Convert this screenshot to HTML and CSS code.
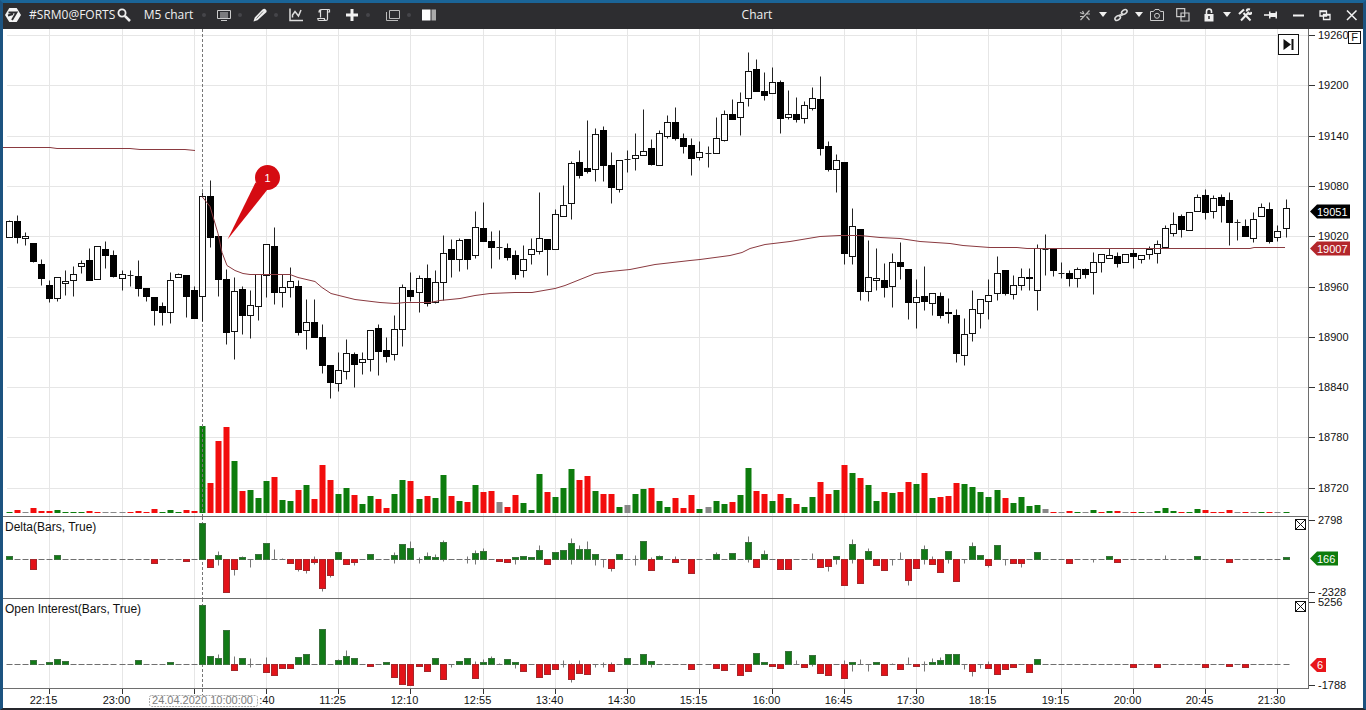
FILE: index.html
```html
<!DOCTYPE html>
<html lang="en">
<head>
<meta charset="utf-8">
<title>Chart</title>
<link rel="stylesheet" href="styles.css">
</head>
<body>
<div class="app">
  <header class="toolbar">
    <div class="group">
      <svg class="logo" viewBox="0 0 16 16"><path d="M4.300 1h7.400L16 8l-4.300 7H4.300L0 8z" fill="#f4f4f4"/><path d="M3.500 5.500h8L7 13M3 8.500l5-1.500" fill="none" stroke="#2d2d30" stroke-width="1.900"/></svg>
      <button class="txt symbol">#SRM0@FORTS</button>
      <button class="ico" aria-label="Search"><svg viewBox="0 0 14 14"><circle cx="5" cy="5" r="3.600" fill="none" stroke="#eee" stroke-width="1.800"/><path d="M7.800 7.800L13 13" stroke="#eee" stroke-width="2.600"/></svg></button>
      <button class="txt period">M5 chart</button>
      <i class="dot"></i>
      <button class="ico" aria-label="Template"><svg viewBox="0 0 14 14"><path d="M.5 2.500h13v8H.5zM3 5h8M3 7h8M3 9h8M4 12.500h6" fill="none" stroke="#ccc"/></svg></button>
      <i class="dot"></i>
      <button class="ico" aria-label="Draw"><svg viewBox="0 0 14 14"><path d="M.5 13.500l1.200-4L9.500 1.500Q11.500 0 13 1.800T12.500 5l-8 7.300z" fill="#eee"/><path d="M3.500 10.500l6.500-7" stroke="#666" stroke-width=".9"/></svg></button>
      <i class="dot"></i>
      <button class="ico" aria-label="Indicators"><svg viewBox="0 0 14 14"><path d="M1 .5v12h13M3.500 9.500V7l2.500-3.500 3.500 4.500 2.500-6" fill="none" stroke="#ddd" stroke-width="1.500"/></svg></button>
      <button class="ico wide" aria-label="Strategies"><svg viewBox="0 0 14 14"><path d="M3.500 9.500V3q0-1.500 1.500-1.500h7.500M4.500 1.500Q2 1.500 2 4h1.500M10.500 1.500V11q0 1.500-1.500 1.500H2Q.8 12.500.8 10.500h6.500q0 2 1.700 2M12.500 1.500V4h-2" fill="none" stroke="#ddd" stroke-width="1.200"/></svg></button>
      <button class="ico wide" aria-label="Add"><svg viewBox="0 0 14 14"><path d="M7 1v12M1 7h12" stroke="#f2f2f2" stroke-width="3"/></svg></button>
      <i class="dot"></i>
      <button class="ico wide" aria-label="Windows"><svg viewBox="0 0 14 14"><path d="M3.500 2.500h10v8h-10zM.5 4v8.500H12" fill="none" stroke="#bbb"/></svg></button>
      <i class="dot"></i>
      <button class="ico" aria-label="Panel"><svg viewBox="0 0 14 14"><path d="M0 1.500h8.500v11H0z" fill="#fff"/><path d="M9.500 1.500h4.500v11H9.500z" fill="#aaa"/></svg></button>
    </div>
    <h1 class="title">Chart</h1>
    <div class="group right">
      <button class="ico" aria-label="Snap"><svg viewBox="0 0 14 14"><path d="M2.500 12l9-9.500M2 4.500l3.500 1.500M8.500 8.500l3 3.500M2 8.500h3.500M8 6h4M4.500 3l1.500 3" fill="none" stroke="#bbb" stroke-width="1.200"/></svg></button>
      <i class="caret"></i>
      <button class="ico" aria-label="Link"><svg viewBox="0 0 14 14"><g fill="none" stroke="#ddd" stroke-width="1.600"><ellipse cx="3.700" cy="10" rx="3" ry="2" transform="rotate(-35 3.700 10)"/><ellipse cx="10.300" cy="4" rx="3" ry="2" transform="rotate(-35 10.300 4)"/><path d="M5 8.500q.5-2 2-1.500t2-1.500"/></g></svg></button>
      <i class="caret"></i>
      <button class="ico" aria-label="Screenshot"><svg viewBox="0 0 14 14"><path d="M.5 3.500h3l1.500-2h4l1.500 2h3v9H.5z" fill="none" stroke="#ccc"/><circle cx="7" cy="7.800" r="2.500" fill="none" stroke="#ccc"/></svg></button>
      <button class="ico spaced" aria-label="Duplicate"><svg viewBox="0 0 14 14"><path d="M.7.700h8v8h-8zM5 5h8v8H5z" fill="none" stroke="#ccc" stroke-width="1.200"/></svg></button>
      <button class="ico spaced" aria-label="Lock"><svg viewBox="0 0 14 14"><path d="M2.500 6h9v7.500h-9z" fill="#eee"/><path d="M4.500 6V3.500q0-2.500 2.500-2.500t2.500 2.500V5" fill="none" stroke="#eee" stroke-width="1.600"/><path d="M7 8v3" stroke="#2d2d30" stroke-width="1.500"/></svg></button>
      <i class="caret"></i>
      <button class="ico" aria-label="Settings"><svg viewBox="0 0 14 14"><path d="M3 12.500L11 4M5.500 5l7 7.500" stroke="#eee" stroke-width="2"/><path d="M1 6l5-4.500M9 3.500q-.5-3 3-2M10.500 5.500q2.500 1.500 3-1.500" fill="none" stroke="#eee" stroke-width="2.200"/></svg></button>
      <button class="ico spaced" aria-label="Pin"><svg viewBox="0 0 14 14"><path d="M0 7h6" stroke="#eee" stroke-width="1.600"/><path d="M5 3.500h1.500V5h5V3.500H13v7h-1.500V9h-5v1.500H5z" fill="#eee"/></svg></button>
      <button class="ico win" aria-label="Minimize"><svg viewBox="0 0 14 14"><path d="M2 7.500h11" stroke="#f2f2f2" stroke-width="2"/></svg></button>
      <button class="ico win" aria-label="Restore"><svg viewBox="0 0 14 14"><path d="M2 3h6.500v5H2zM2 3.500h6.500M5.500 6.500H12v5H5.500zM5.500 7H12" fill="#2d2d30" stroke="#f2f2f2" stroke-width="1.300"/></svg></button>
      <button class="ico win" aria-label="Close"><svg viewBox="0 0 14 14"><path d="M2 2.500l9.500 9.500M11.500 2.500L2 12" stroke="#f2f2f2" stroke-width="1.500"/></svg></button>
    </div>
  </header>
  <main class="chart">
    <section class="pane price">
      <svg class="plot" id="price"></svg>
      <button class="jump" aria-label="Go to last bar"><svg viewBox="0 0 19 19"><path d="M4.500 4v11l7.500-5.500z" fill="#111"/><path d="M13.500 4v11" stroke="#111" stroke-width="2"/></svg></button>
    </section>
    <aside class="scale">
      <svg class="plot" id="priceScale"></svg>
      <button class="fix">F</button>
    </aside>
    <section class="pane">
      <svg class="plot" id="delta"></svg>
      <h2 class="name">Delta(Bars, True)</h2>
      <button class="close" aria-label="Close Delta"><svg viewBox="0 0 9 9"><path d="M0 0l9 9M9 0L0 9" stroke="#111"/></svg></button>
    </section>
    <aside class="scale"><svg class="plot" id="deltaScale"></svg></aside>
    <section class="pane">
      <svg class="plot" id="oi"></svg>
      <h2 class="name">Open Interest(Bars, True)</h2>
      <button class="close" aria-label="Close Open Interest"><svg viewBox="0 0 9 9"><path d="M0 0l9 9M9 0L0 9" stroke="#111"/></svg></button>
    </section>
    <aside class="scale"><svg class="plot" id="oiScale"></svg></aside>
    <footer class="time"><svg class="plot" id="time"></svg></footer>
  </main>
</div>
<script src="chart.js"></script>
</body>
</html>
```
FILE: styles.css
```css
* { box-sizing: border-box; }
body {
  margin: 0;
  font-family: "Liberation Sans", Arial, sans-serif;
  font-size: 11px;
  color: #111;
  background: #fff;
}
button { border: 0; padding: 0; background: none; color: inherit; font: inherit; }
svg { display: block; }
.app {
  display: flex;
  flex-direction: column;
  height: 100vh;
  border: 3px solid #1c5380;
  border-top-color: #1a6497;
  border-bottom: 2px solid #25262c;
}
.toolbar {
  display: flex;
  align-items: center;
  justify-content: space-between;
  height: 26px;
  padding: 0 4px 3px 2px;
  background: #2d2d30;
  color: #f0f0f0;
  font-family: "Open Sans", "Noto Sans", sans-serif;
  font-size: 12px;
}
.group { display: flex; align-items: center; }
.logo { width: 16px; height: 16px; }
.txt { white-space: nowrap; line-height: 20px; }
.symbol { width: 88px; margin-left: 8px; text-align: left; }
.period { width: 53px; margin-left: 11px; }
.title { margin: 0; font-size: 12px; font-weight: 400; }
.ico { flex: none; width: 14px; height: 14px; }
.ico svg { width: 14px; height: 14px; }
.wide { margin-left: 14px; }
.dot + .wide { margin-left: 5px; }
.dot { width: 4px; height: 4px; margin: 0 11px 0 7px; border-radius: 2px; background: #45454a; }
.caret {
  margin: 0 7px;
  border: 4px solid transparent;
  border-top: 5px solid #f0f0f0;
  border-bottom: 0;
}
.spaced { margin-left: 12px; }
.win { margin-left: 13px; }
.chart {
  flex: 1;
  min-height: 0;
  display: grid;
  grid-template-columns: minmax(0, 1fr) 55px;
  grid-template-rows: minmax(0, 1fr) 82px 90px 19px;
}
.pane { position: relative; border-bottom: 1px solid #6e6e6e; }
.scale { position: relative; border-left: 1px solid #6e6e6e; }
.plot { width: 100%; height: 100%; overflow: visible; position: absolute; inset: 0; }
.time { grid-column: 1 / -1; position: relative; }
.name {
  position: absolute;
  top: 2px;
  left: 2px;
  margin: 0;
  font-size: 12px;
  font-weight: 400;
  line-height: 16px;
}
.jump {
  position: absolute;
  top: 5px;
  right: 9px;
  width: 21px;
  height: 21px;
  border: 1px solid #111;
  background: #fff;
}
.fix {
  position: absolute;
  top: 2px;
  right: 2px;
  width: 13px;
  height: 13px;
  border: 1px solid #111;
  background: #fff;
  line-height: 11px;
}
.close {
  position: absolute;
  top: 2px;
  right: 2px;
  width: 11px;
  height: 11px;
  border: 1px solid #111;
  background: #fff;
}
.grid { stroke: #e6e6e6; }
.tick { stroke: #333; }
.cross { stroke: #777; stroke-dasharray: 3 2; }
.wick { stroke: #222; }
.bull { fill: #fff; stroke: #111; }
.bear { fill: #000; }
.vwap { fill: none; stroke: #8a3a40; stroke-width: 1; }
.g { fill: #0d7c0d; }
.r { fill: #f20d0d; }
.n { fill: #888; }
.up { fill: #127a17; stroke: #3b703e; }
.down { fill: #e31219; stroke: #a3272b; }
.flat { stroke: #6f6f6f; }
.stem { stroke: #777; }
.callout { fill: #d50b12; }
.light { fill: #fff; }
.stamp { fill: #fff; stroke: #aaa; stroke-dasharray: 2 1; }
.muted { fill: #7d7d7d; }
```
FILE: chart.js
```js
// Candles: high, body top, body bottom, low, kind (o = rising, f = falling, d = doji)
const candles = `220 221 237 237 o|215 221 237 243 f|232 236 238 245 o|243 243 261 262 f|259 264 278 285 f|280 285 298 302 f|277 277 298 301 o|270 281 282 295 o|266 274 280 296 o|260 263 266 273 o
248 260 280 280 f|246 246 279 279 o|241 249 255 268 f|250 255 276 277 f|270 274 278 290 o|270 275 275 286 d|260 276 288 296 f|288 288 296 301 f|297 297 310 325 f|302 306 312 325 f
272 280 312 323 o|273 274 277 277 o|275 275 296 317 f|286 290 318 318 f|192 196 296 321 o|180 196 237 247 f|236 236 279 296 f|269 279 332 344 f|277 291 331 359 o|286 289 315 334 f
290 305 315 338 o|274 274 306 320 o|244 244 275 297 o|227 246 292 304 f|274 287 292 307 o|267 281 287 297 o|280 286 332 335 f|299 322 330 349 o|299 322 337 337 f|324 337 365 373 f
365 365 382 398 f|352 370 383 391 o|339 353 371 379 o|352 354 364 387 f|352 359 362 374 o|330 330 359 371 o|324 328 351 375 f|337 350 356 362 f|315 329 354 360 o|284 287 329 346 o
272 290 296 301 f|275 278 292 312 o|264 278 303 306 f|270 282 302 303 o|235 253 282 300 o|239 249 259 277 f|238 240 259 271 o|239 239 259 269 f|211 227 255 258 o|202 228 241 241 f
231 241 247 268 f|230 247 247 259 d|243 248 257 260 f|250 255 274 279 f|245 259 270 277 o|238 249 254 264 o|192 238 251 254 o|239 239 249 275 f|209 214 249 249 o|185 205 216 216 o
161 163 203 219 o|150 162 175 178 f|120 168 171 173 f|128 134 169 181 o|126 130 165 181 f|152 165 187 203 f|160 160 189 192 o|150 159 159 172 d|133 155 158 170 o|109 151 155 155 o
139 148 164 165 f|130 133 165 165 o|115 122 136 138 o|107 122 138 140 f|133 138 146 153 f|138 145 158 175 f|141 152 157 160 o|146 153 153 167 d|117 138 153 153 o|110 114 140 141 o
99 114 119 119 f|92 102 117 135 o|52 71 98 106 o|59 69 91 91 f|72 91 95 100 f|67 82 93 93 o|80 82 118 133 f|90 114 117 119 o|97 114 119 122 f|101 105 118 123 o
87 98 108 110 o|76 99 148 155 f|141 146 169 171 f|154 160 169 192 o|162 162 253 264 f|208 226 256 264 o|229 229 291 300 f|240 277 291 301 o|248 278 280 290 o|263 280 287 297 f
253 262 286 307 o|242 262 266 279 f|269 269 302 319 f|279 297 302 328 o|266 296 301 310 f|293 293 303 315 o|292 296 315 318 f|298 312 313 323 f|309 315 353 362 f|318 334 355 365 o
290 309 333 341 o|299 299 313 328 o|279 295 301 319 o|256 273 293 300 o|270 270 293 295 f|275 285 294 299 o|268 277 285 290 o|268 277 278 290 f|244 248 290 310 o|234 249 249 275 d
249 249 270 276 f|262 273 273 278 d|270 273 278 286 f|267 269 278 287 o|268 269 274 278 f|252 262 272 294 o|254 254 262 272 o|248 255 258 258 o|252 256 263 267 f|254 254 262 262 o
249 253 256 268 f|255 255 259 263 o|246 249 254 259 o|240 244 253 263 o|225 228 247 247 o|212 224 233 236 o|214 216 229 237 f|212 212 230 230 o|194 197 211 211 o|189 195 212 219 f
195 198 211 218 o|194 197 205 222 f|192 200 222 245 f|219 222 222 240 d|219 226 236 236 f|212 219 238 242 o|203 207 216 216 o|202 209 241 243 f|225 231 237 241 o|199 208 228 237 o`
  .split(/[|\n]/).map(s => { const a = s.trim().split(' '); return [+a[0], +a[1], +a[2], +a[3], a[4]]; });

// Volume: height and colour (g green, r red, n neutral)
const volume = `1g 3r 0n 5r 2r 2r 3g 1g 1g 1g 2r 0r 0n 0n 0n 0r 2r 0r 4r 0g 3g 0g 3r 2r 87g 30r 72r 86r 52g 22r 23g 15g 32g 36r 13g 12g 23r 28g 14r 48r
33r 19g 25g 18r 9g 17g 14r 5r 19g 33g 32r 14g 17r 15g 38g 17r 12g 11r 28g 21r 22r 11n 6r 18r 10g 3g 39g 21r 16g 25g 44g 33r 37r 22g 19r 19r 6g 8n 19g 24g
25r 12g 6g 15r 5r 18r 4g 6n 12g 9g 11r 18g 45g 22r 19r 12g 19r 15g 9r 6g 16g 31r 19r 23g 48r 40g 35r 28g 12g 21r 20g 21r 31r 29g 40r 15g 16r 17r 30r 29g
26g 21g 16g 23g 15r 10g 16g 7g 8g 4n 1r 0n 2r 1g 0n 3g 0r 2g 2r 0n 1r 0g 0n 2g 5g 2g 0r 1g 4g 3r 0r 1r 3r 0n 1r 0n 0g 1r 0n 1g`
  .split(/\s+/).map(s => [parseInt(s), s.slice(-1)]);

// Histograms: value[,top of stem[,bottom of stem]]
const parseBars = t => t.trim().split(/\s+/).map(s => s.split(',').map(Number));
const delta = parseBars(`3 1 0 -10 -1 -1 4 1 0 -1 0 0 0 0 1 0 1 0 -4 -1 1 1 -2 -1 36 -8 4,8,-6 -33 -10,0,-16 2,3 0,0,-8 5 16 0,10 0,1 -4 -10,0,-12 -11,0,-14 -3,3,-5 -29,0,-32
-16,0,-18 7 -5 -3,0,-6 -1 5 -1 0 4,7,-4 15 11,18 0,2,-4 3,7 2,5 17,19,-2 -1 0 1,3,-4 6,9,-5 8,11 1 -2 -3 2,0,-5 3 2 9,14 -5 7 9 16,21,-5 10,14 10,18 5,0,-6 0,0,-8 -9,0,-12 5 1 1,4,-6 18
-11,2 3,4 1 -3,3 -1 -14 1 -1 5,7 0 6 0 17,23,-3 -8 5,9 0 -10 -10 -1 -1 1,6 -8 -7,0,-12 3,0,-5 -26 15,20,-4 -24 8,11 -6 -11 -1,0,-6 0,7 -21,0,-26 -9 10,14,-5 -5,3 -13 8,0,-4 -22 0,0,-4
13,17 4 -6,0,-8 14 -1,0,-6 -4 -4,0,-8 1 7 1 -1 -1 -4 0 0 0,0,-3 0 3 -3 0 -1 -1 0 1 1,4 1 0 1 3 0 0 0 -3 0 -1 0 0 -1 0 2`);
const oi = parseBars(`0 1 -1 4 0 2 5 3 0 -1 0 -1 0 0 -1 0 4 0 -1 -1 2 -1 -1 -1 59 8 6,10 34 -6,8 6 0,6,-3 1 -8,7 -11 -4 -4 7 10 -1 35
-1 4,5 8,14 6 1 -2 1 2 -13 -20 -21 -2 -7 6 -15 0,0,-3 3 6 -14,3 2,5 6,8 0,1 5 2,0,-4 -7 -1 -13 -10 -5 1,4,-3 -15,1,-18 -9,4 -10 0,0,-3 0,2,-3 -7,2 -1 6 1 10
3,0,-3 1 0 1 0 -5 0 -1 -4 -6 -1 -11 -7 11 2 -2 -4 13 0,4 -3 9,0,-2 -9 -11 0 -14,4 2,0,-7 0,5 -1,0,-7 2 -11 -1,1 -5 1,7 -2 0,3,-7 2,6 4,7 10 10 0,0,-5
-7,0,-12 -1,0,-4 -4,3 -10 -5 -3 1 -8 5 1 1 0 -1 0 0 1 1 0 0 0 -3 0 -1 -3 -1 -1 -1 1 0 -3 0 -1 -2 0 -3 -1 0 0 0 0`);

// VWAP points: bar position, level
const vwap = [
  [[3, 147], [50, 147], [57, 148], [130, 148], [140, 149], [185, 149], [195, 150]],
  [[202, 196], [210, 206], [218, 233], [222, 252], [227, 265], [235, 270], [243, 273], [250, 274], [290, 274], [298, 277], [315, 281], [322, 287], [331, 293], [355, 299], [380, 302], [395, 303], [405, 302], [430, 302], [440, 300], [460, 298], [475, 295], [490, 293], [515, 292], [532, 292], [555, 288], [565, 285], [580, 279], [595, 273], [610, 271], [630, 269], [640, 267], [655, 264], [690, 260], [700, 259], [730, 255], [742, 252], [750, 248], [765, 244], [790, 241], [820, 236], [840, 235], [860, 235], [880, 237], [900, 238], [920, 241], [950, 243], [963, 245], [990, 247], [1017, 247], [1027, 248], [1250, 248], [1254, 247], [1285, 247]]
];
const times = ['22:15', '23:00', '', '10:40', '11:25', '12:10', '12:55', '13:40', '14:30', '15:15', '16:00', '16:45', '17:30', '18:15', '19:15', '20:00', '20:45', '21:30'];

const $ = id => document.getElementById(id);
const rect = (c, x, y, w, h, extra = '') => `<rect class="${c}" x="${x}" y="${y}" width="${w}" height="${h}" ${extra}/>`;
const line = (c, x1, y1, x2, y2) => `<path class="${c}" d="M${x1} ${y1}L${x2} ${y2}"/>`;
const text = (x, y, s, c = '', a = 'start') => `<text class="${c}" x="${x}" y="${y}" text-anchor="${a}" font-size="11" fill="${c ? '' : '#111'}">${s}</text>`;
const tag = (y, s, color, w) => `<path fill="${color}" d="M1 ${y}L8 ${y - 7}H${w}V${y + 7}H8z"/>` + text(8, y + 4, s, 'light');

function draw() {
  const W = $('price').clientWidth, H = $('price').clientHeight;
  const step = (W - 28.6) / 159;
  const X = i => Math.floor(6.615 + step * i) + 0.5;
  const k = H / 487;
  const Y = y => Math.round((y - 29) * k) + 0.5;
  const columns = h => times.map((t, n) => line('grid', X(5 + n * 9), 0, X(5 + n * 9), h)).join('');
  const cross = h => line('cross', X(24), 0, X(24), h);

  let s = columns(H), scale = '';
  for (let n = 0; n < 10; n++) {
    const y = Y(35 + n * 50.3);
    s += line('grid', 4, y, W, y);
    scale += line('tick', 0, y, 6, y) + text(9, y + 3.5, 19260 - n * 60);
  }
  volume.forEach(([h, c], i) => { s += rect(c, X(i) - 3, H - 3 - Math.max(h, 1), 6, Math.max(h, 1)); });
  s += cross(H);
  candles.forEach(([h, t, b, l, kind], i) => {
    const x = X(i);
    s += line('wick', x, Y(h), x, Y(l));
    if (kind === 'o') s += rect('bull', x - 3, Y(t), 6, Math.max(Y(b) - Y(t), 2));
    else if (kind === 'f') s += rect('bear', x - 3.5, Y(t) - 0.5, 7, Math.max(Y(b) - Y(t) + 1, 2));
    else s += line('wick', x - 3, Y(t), x + 3, Y(t));
  });
  vwap.forEach(p => {
    s += `<path class="vwap" d="M${p.map(([x, y]) => [6.6 + (x - 9.6) / 8.0275 * step, Y(y)].join(' ')).join('L')}"/>`;
  });
  const cx = X(32) + 1, cy = Y(177);
  s += `<circle class="callout" cx="${cx}" cy="${cy}" r="12.5"/><path class="callout" d="M${cx - 12} ${cy + 5}L${cx - 40} ${Y(239)}L${cx} ${cy + 12}z"/>` + text(cx, cy + 4, '1', 'light', 'middle');
  $('price').innerHTML = s;
  scale += tag(Y(211), '19051', '#000', 41) + tag(Y(248), '19007', '#b3262b', 41);
  $('priceScale').innerHTML = scale;

  const histogram = (id, data, base) => {
    const h = $(id).clientHeight;
    let out = columns(h) + cross(h);
    data.forEach(([v, a = 0, b = 0], i) => {
      const x = X(i);
      if (a || b) out += line('stem', x, base - a, x, base - b);
      if (Math.abs(v) < 2) out += line('flat', x - 3, base, x + 3, base);
      else out += rect(v > 0 ? 'up' : 'down', x - 3, v > 0 ? base - v : base, 6, Math.abs(v));
    });
    $(id).innerHTML = out;
  };
  histogram('delta', delta, 42.5);
  histogram('oi', oi, 65.5);
  $('deltaScale').innerHTML = line('tick', 0, 3.5, 6, 3.5) + text(9, 7, '2798') + line('tick', 0, 75.5, 6, 75.5) + text(9, 79, '-2328') + tag(41.5, '166', '#0d7c0d', 29);
  $('oiScale').innerHTML = line('tick', 0, 3.5, 6, 3.5) + text(9, 7, '5256') + line('tick', 0, 86.5, 6, 86.5) + text(9, 90, '-1788') + tag(66, '6', '#e8151a', 17);

  // The crosshair stamp covers the start of any label that it reaches
  const stampRight = X(24) + 55;
  let axis = '';
  times.forEach((t, n) => {
    const x = X(5 + n * 9);
    axis += line('tick', x, 0, x, 5);
    const hidden = x - 20 < stampRight && x > X(24);
    axis += hidden ? text(x + 8, 15, t.slice(2), '', 'end') : text(x - 6, 15, t, '', 'middle');
  });
  axis += line('cross', X(24), 0, X(24), 6) + rect('stamp', X(24) - 53, 6.5, 108, 11, 'rx="2"') + text(X(24), 15, '24.04.2020 10:00:00', 'muted', 'middle');
  $('time').innerHTML = axis;
}
draw();
window.addEventListener('resize', draw);
```
